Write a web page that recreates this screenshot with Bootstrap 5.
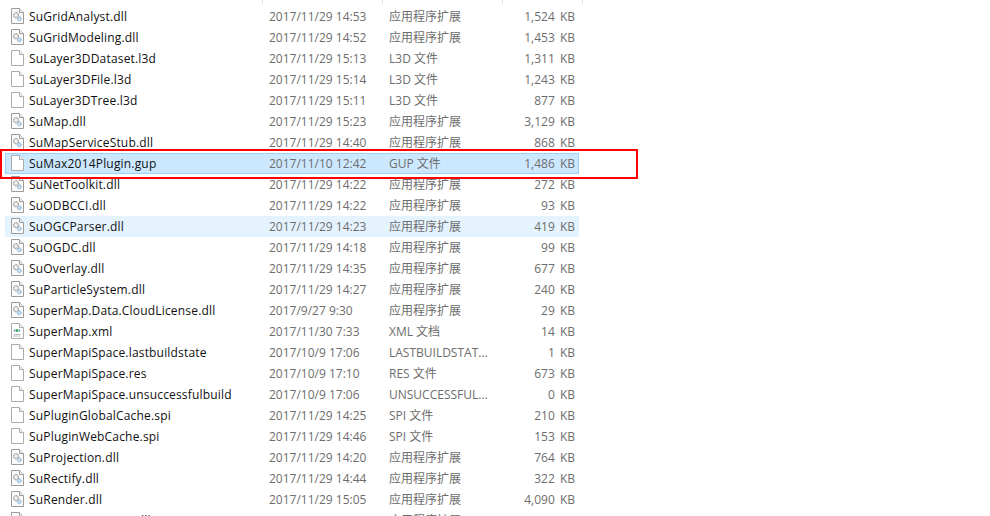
<!DOCTYPE html>
<html lang="zh-CN">
<head>
  <meta charset="UTF-8">
  <title>SuperMap files</title>
  <link href="https://cdn.jsdelivr.net/npm/bootstrap@5.3.0/dist/css/bootstrap.min.css" rel="stylesheet">
  <style>
    html, body { height: 516px; overflow: hidden; background: #fff; }
    body { font-family: "Open Sans", "Noto Sans CJK SC", sans-serif; font-size: 12px; line-height: 21px; color: #6d6d6d; }
    .file-pane { position: relative; width: 990px; height: 516px; overflow: hidden; padding-left: 5px; }
    .head-ticks { height: 6px; }
    .head-ticks div { height: 4px; border-right: 1px solid #e5e5e5; }
    .tick-name { width: 258px; }
    .tick-date, .tick-type { width: 120px; }
    .tick-size { width: 80px; }
    .file-row { width: 574px; height: 21px; white-space: nowrap; }
    .file-row.is-hover { background: #e5f3ff; }
    .file-row.is-selected { background: #cce8ff; box-shadow: inset 0 0 0 1px #99d1ff; }
    .file-name { width: 264px; color: #111; letter-spacing: .18px; }
    .file-name svg { margin: 0 5px 2px 5px; flex: none; }
    .file-date { width: 120px; }
    .file-type { width: 102px; }
    .file-size { width: 84px; text-align: right; word-spacing: 2px; }
    .red-mark { position: absolute; left: 0; top: 149px; width: 638px; height: 30px; border: 2px solid #f00; }
  </style>
</head>
<body>

  <svg width="0" height="0" class="d-block">
    <symbol id="icon-blank" viewBox="0 0 14 16">
      <path d="M1.5 .5H9.5L13.5 4.5V15.5H1.5Z" fill="#fff" stroke="#acacac"/>
      <path d="M9.5 .5V4.5H13.5" fill="#f2f2f2" stroke="#acacac"/>
    </symbol>
    <symbol id="icon-dll" viewBox="0 0 14 16">
      <path d="M1.5 .5H9.5L13.5 4.5V15.5H1.5Z" fill="#fbfbfb" stroke="#9c9c9c"/>
      <path d="M9.5 .5V4.5H13.5" fill="#eee" stroke="#9c9c9c"/>
      <circle cx="6" cy="7.2" r="2.6" fill="#dcdcdc" stroke="#8f8f8f" stroke-dasharray="1.3 .7"/>
      <circle cx="6" cy="7.2" r=".9" fill="#fff"/>
      <circle cx="9.2" cy="10.8" r="2" fill="#b9d6ee" stroke="#86aacb" stroke-dasharray="1.1 .6"/>
      <circle cx="9.2" cy="10.8" r=".6" fill="#fff"/>
    </symbol>
    <symbol id="icon-xml" viewBox="0 0 14 16">
      <path d="M1.5 .5H9.5L13.5 4.5V15.5H1.5Z" fill="#fff" stroke="#acacac"/>
      <path d="M9.5 .5V4.5H13.5" fill="#f2f2f2" stroke="#acacac"/>
      <path d="M3.5 7.5L5 6V9ZM10.5 7.5L9 6V9Z" fill="#3f8fc9"/>
      <circle cx="7" cy="7.5" r="1.5" fill="#3aa655"/>
      <path d="M3.5 11.5H10.5M3.5 13H10.5" stroke="#bbb"/>
    </symbol>
  </svg>

  <div class="file-pane" id="pane"></div>

<script>
  const D = '应用程序扩展';
  const files = [
    ['SuGridAnalyst.dll', '2017/11/29 14:53', D, '1,524 KB', 'dll'],
    ['SuGridModeling.dll', '2017/11/29 14:52', D, '1,453 KB', 'dll'],
    ['SuLayer3DDataset.l3d', '2017/11/29 15:13', 'L3D 文件', '1,311 KB', 'blank'],
    ['SuLayer3DFile.l3d', '2017/11/29 15:14', 'L3D 文件', '1,243 KB', 'blank'],
    ['SuLayer3DTree.l3d', '2017/11/29 15:11', 'L3D 文件', '877 KB', 'blank'],
    ['SuMap.dll', '2017/11/29 15:23', D, '3,129 KB', 'dll'],
    ['SuMapServiceStub.dll', '2017/11/29 14:40', D, '868 KB', 'dll'],
    ['SuMax2014Plugin.gup', '2017/11/10 12:42', 'GUP 文件', '1,486 KB', 'blank', 'is-selected'],
    ['SuNetToolkit.dll', '2017/11/29 14:22', D, '272 KB', 'dll'],
    ['SuODBCCI.dll', '2017/11/29 14:22', D, '93 KB', 'dll'],
    ['SuOGCParser.dll', '2017/11/29 14:23', D, '419 KB', 'dll', 'is-hover'],
    ['SuOGDC.dll', '2017/11/29 14:18', D, '99 KB', 'dll'],
    ['SuOverlay.dll', '2017/11/29 14:35', D, '677 KB', 'dll'],
    ['SuParticleSystem.dll', '2017/11/29 14:27', D, '240 KB', 'dll'],
    ['SuperMap.Data.CloudLicense.dll', '2017/9/27 9:30', D, '29 KB', 'dll'],
    ['SuperMap.xml', '2017/11/30 7:33', 'XML 文档', '14 KB', 'xml'],
    ['SuperMapiSpace.lastbuildstate', '2017/10/9 17:06', 'LASTBUILDSTAT...', '1 KB', 'blank'],
    ['SuperMapiSpace.res', '2017/10/9 17:10', 'RES 文件', '673 KB', 'blank'],
    ['SuperMapiSpace.unsuccessfulbuild', '2017/10/9 17:06', 'UNSUCCESSFUL...', '0 KB', 'blank'],
    ['SuPluginGlobalCache.spi', '2017/11/29 14:25', 'SPI 文件', '210 KB', 'blank'],
    ['SuPluginWebCache.spi', '2017/11/29 14:46', 'SPI 文件', '153 KB', 'blank'],
    ['SuProjection.dll', '2017/11/29 14:20', D, '764 KB', 'dll'],
    ['SuRectify.dll', '2017/11/29 14:44', D, '322 KB', 'dll'],
    ['SuRender.dll', '2017/11/29 15:05', D, '4,090 KB', 'dll'],
    ['SuScreenManager.dll', '2017/11/29 14:31', D, '512 KB', 'dll']
  ];

  const pane = document.getElementById('pane');
  const ticks = `
    <div class="head-ticks d-flex">
      <div class="tick-name"></div><div class="tick-date"></div><div class="tick-type"></div><div class="tick-size"></div>
    </div>`;
  pane.innerHTML = ticks + files.map(f => `
    <div class="file-row d-flex align-items-center ${f[5] || ''}">
      <div class="file-name d-flex align-items-center">
        <svg width="14" height="16"><use href="#icon-${f[4]}"></use></svg><span>${f[0]}</span>
      </div>
      <div class="file-date">${f[1]}</div>
      <div class="file-type">${f[2]}</div>
      <div class="file-size">${f[3]}</div>
    </div>`).join('') + '<div class="red-mark"></div>';
</script>
<script src="https://cdn.jsdelivr.net/npm/bootstrap@5.3.0/dist/js/bootstrap.bundle.min.js"></script>
</body>
</html>
